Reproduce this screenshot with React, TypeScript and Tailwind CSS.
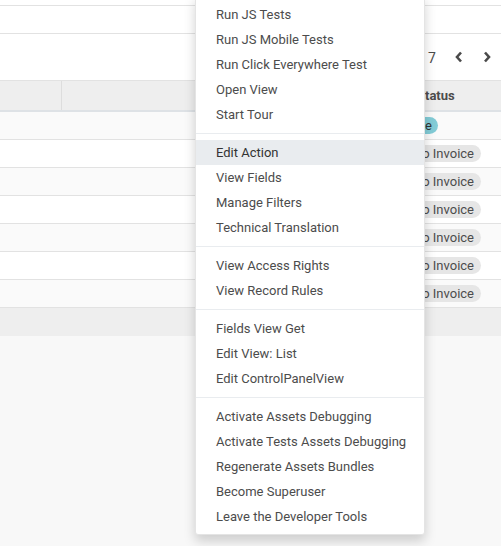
import React from "react";

const groups: string[][] = [
  ["Run JS Tests", "Run JS Mobile Tests", "Run Click Everywhere Test", "Open View", "Start Tour"],
  ["Edit Action", "View Fields", "Manage Filters", "Technical Translation"],
  ["View Access Rights", "View Record Rules"],
  ["Fields View Get", "Edit View: List", "Edit ControlPanelView"],
  [
    "Activate Assets Debugging",
    "Activate Tests Assets Debugging",
    "Regenerate Assets Bundles",
    "Become Superuser",
    "Leave the Developer Tools",
  ],
];

const rows = [
  { label: "Done", teal: true },
  { label: "Nothing to Invoice", teal: false },
  { label: "Nothing to Invoice", teal: false },
  { label: "Nothing to Invoice", teal: false },
  { label: "Nothing to Invoice", teal: false },
  { label: "Nothing to Invoice", teal: false },
  { label: "Nothing to Invoice", teal: false },
];

function ChevronLeft() {
  return (
    <svg width="8" height="12" viewBox="0 0 8 12">
      <path d="M6 1.5 L2 6 L6 10.5" fill="none" stroke="#4a4a4a" strokeWidth="2.6" strokeLinejoin="miter" />
    </svg>
  );
}
function ChevronRight() {
  return (
    <svg width="8" height="12" viewBox="0 0 8 12">
      <path d="M2 1.5 L6 6 L2 10.5" fill="none" stroke="#4a4a4a" strokeWidth="2.6" strokeLinejoin="miter" />
    </svg>
  );
}

export default function App() {
  return (
    <div
      className="relative w-[501px] h-[546px] overflow-hidden bg-[#f8f8f8] text-[13px] text-[#4c4c4c]"
      style={{ fontFamily: "Roboto, 'Liberation Sans', sans-serif" }}
    >
      <div className="h-[6px] bg-white border-b border-[#e2e2e2]" />
      <div className="h-[28px] bg-white border-b border-[#e2e2e2]" />
      <div className="h-[47px] bg-white border-b border-[#e2e2e2] flex items-center justify-end pr-[10px]">
        <span className="leading-none mr-[19px] mt-[1px] text-[14px]">1-7 / 7</span>
        <span className="mr-[20px] flex items-center"><ChevronLeft /></span>
        <span className="flex items-center"><ChevronRight /></span>
      </div>
      <div className="h-[31px] bg-[#eeeeee] border-b-2 border-[#dee2e6] flex">
        <div className="w-[62px] border-r border-[#dddddd]" />
        <div className="flex-1 flex items-center pl-[355px] font-bold">Status</div>
      </div>
      {rows.map((r, i) => (
        <div
          key={i}
          className={`h-[28px] border-b border-[#e2e2e2] flex items-center justify-end ${
            i % 2 === 0 ? "bg-[#fafafa]" : "bg-white"
          }`}
        >
          {r.teal ? (
            <span className="mr-[63px] h-[17px] px-[6px] rounded-full bg-[#83ccd7] text-[#333] leading-[17px] text-[13px]">
              {r.label}
            </span>
          ) : (
            <span className="mr-[20px] h-[17px] px-[7px] rounded-full bg-[#e6e6e6] text-[#4c4c4c] leading-[17px] text-[13px]">
              {r.label}
            </span>
          )}
        </div>
      ))}
      <div className="h-[28px] bg-[#eeeeee]" />

      <div className="absolute left-[195px] top-[-5px] w-[230px] bg-white border border-[#e4e4e4] rounded-b-[3px] shadow-[0_6px_12px_rgba(0,0,0,0.175)] pt-[6px] pb-[5px]">
        {groups.map((g, gi) => (
          <div key={gi}>
            {gi > 0 && <div className="my-[6px] h-px bg-[#e9ecef]" />}
            {g.map((label) => (
              <div
                key={label}
                className={`h-[25px] leading-[25px] pl-[20px] whitespace-nowrap ${
                  label === "Edit Action" ? "bg-[#e9ecef] text-[#333]" : "text-[#4c4c4c]"
                }`}
              >
                {label}
              </div>
            ))}
          </div>
        ))}
      </div>
    </div>
  );
}
